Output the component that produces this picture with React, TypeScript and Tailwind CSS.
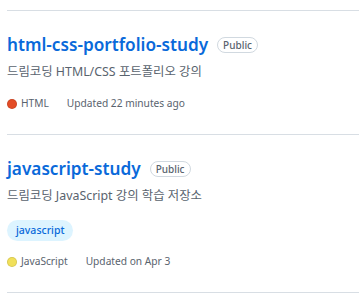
const repos = [
  {
    name: "html-css-portfolio-study",
    description: "드림코딩 HTML/CSS 포트폴리오 강의",
    topics: [] as string[],
    language: "HTML",
    color: "#e34c26",
    updated: "Updated 22 minutes ago",
  },
  {
    name: "javascript-study",
    description: "드림코딩 JavaScript 강의 학습 저장소",
    topics: ["javascript"],
    language: "JavaScript",
    color: "#f1e05a",
    updated: "Updated on Apr 3",
  },
];

export default function App() {
  return (
    <div
      className="min-h-screen bg-white pt-[10px] pl-[7px]"
      style={{ fontFamily: '"Noto Sans", "Noto Sans CJK KR", sans-serif' }}
    >
      <ul>
        {repos.map((r) => (
          <li key={r.name} className="border-t border-[#d8dee4] pt-[21px] pb-[23px] last:border-b">
            <div className="flex h-[26px] items-center">
              <a href="#" className="text-[17.2px] font-semibold leading-[26px] text-[#0969da]">
                {r.name}
              </a>
              <span className="ml-[9px] rounded-full border border-[#d1d9e0] px-[5px] text-[10px] leading-[14px] font-medium text-[#59636e]">
                Public
              </span>
            </div>
            <p className="mt-[5px] text-[12.4px] leading-[18px] text-[#59636e]">{r.description}</p>
            {r.topics.length > 0 && (
              <div className="mt-[15px] flex gap-1">
                {r.topics.map((t) => (
                  <span
                    key={t}
                    className="rounded-full bg-[#ddf4ff] px-[9px] text-[10.5px] leading-[21px] font-medium text-[#0969da]"
                  >
                    {t}
                  </span>
                ))}
              </div>
            )}
            <div className={`${r.topics.length > 0 ? "mt-[13px]" : "mt-[15px]"} flex h-[15px] items-center text-[10.2px] leading-[15px] text-[#59636e]`}>
              <span
                className="mr-1 inline-block h-[10px] w-[10px] rounded-full border border-black/10"
                style={{ backgroundColor: r.color }}
              />
              <span>{r.language}</span>
              <span className="ml-[18px]">{r.updated}</span>
            </div>
          </li>
        ))}
      </ul>
    </div>
  );
}
